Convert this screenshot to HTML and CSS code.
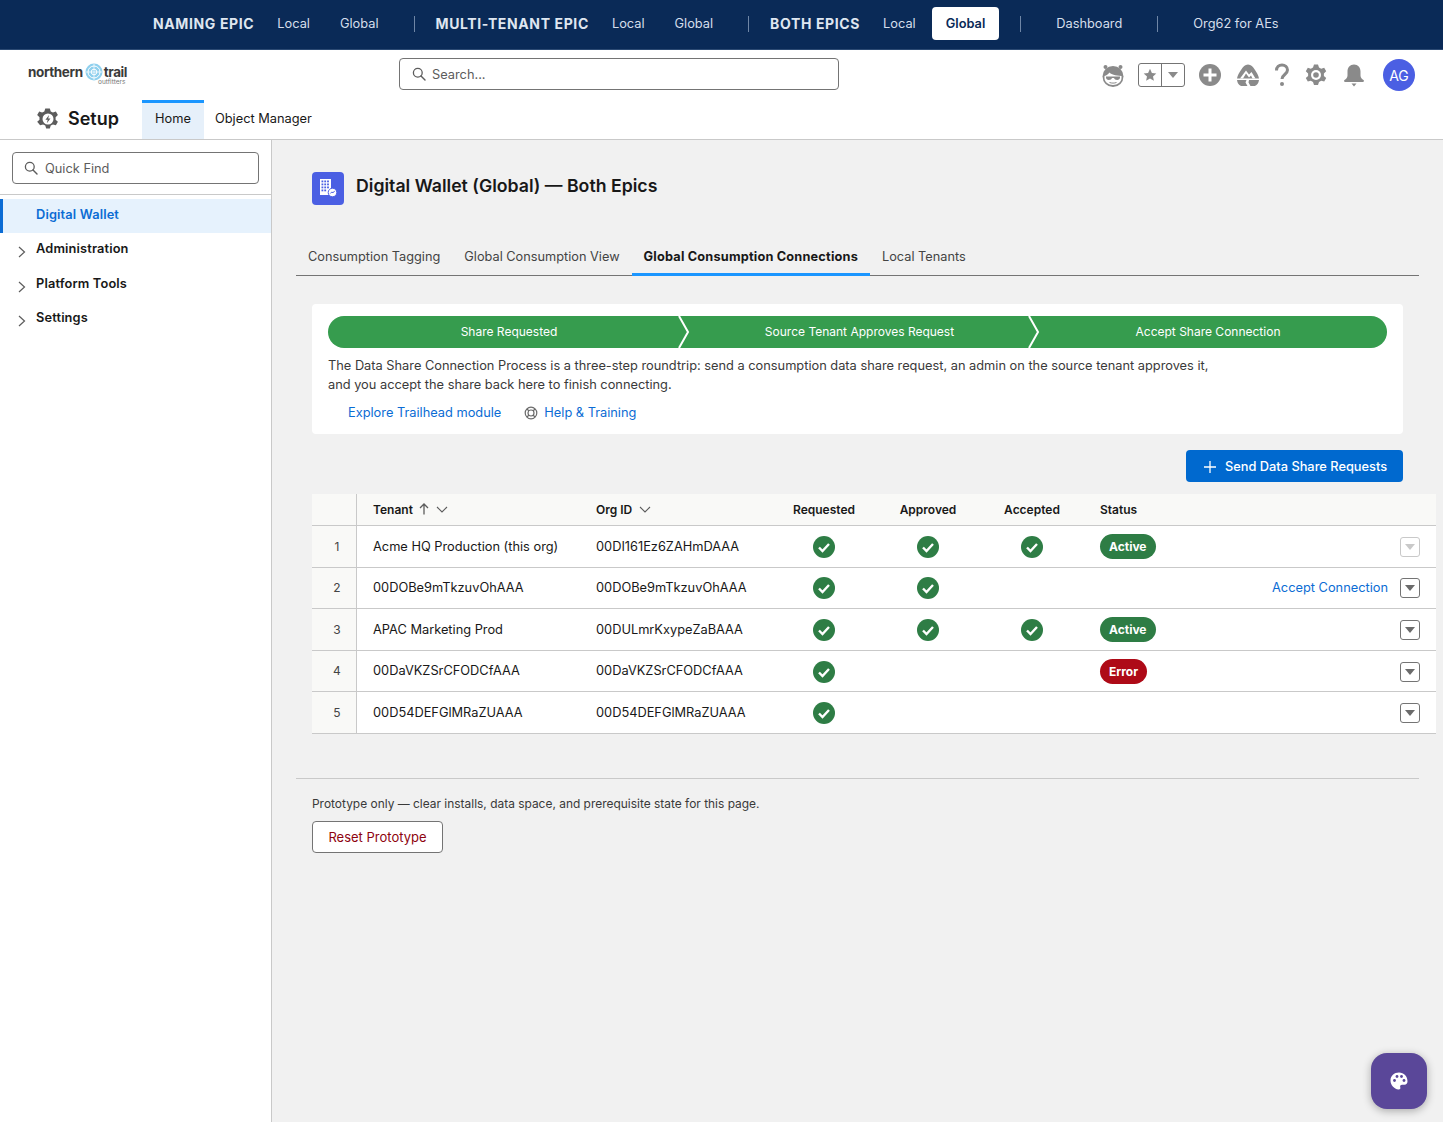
FILE: index.html
```html
<!DOCTYPE html>
<html lang="en">
<head>
    <meta charset="UTF-8">
    <meta name="viewport" content="width=device-width, initial-scale=1.0">
    <title>Digital Wallet (Global) — Both Epics</title>
    <link rel="stylesheet" href="styles.css">
</head>
<body>
    <nav class="topnav">
        <span class="topnav-label">NAMING EPIC</span>
        <a class="topnav-link">Local</a>
        <a class="topnav-link">Global</a>
        <span class="topnav-divider"></span>
        <span class="topnav-label">MULTI-TENANT EPIC</span>
        <a class="topnav-link">Local</a>
        <a class="topnav-link">Global</a>
        <span class="topnav-divider"></span>
        <span class="topnav-label">BOTH EPICS</span>
        <a class="topnav-link">Local</a>
        <a class="topnav-link active">Global</a>
        <span class="topnav-divider"></span>
        <a class="topnav-link">Dashboard</a>
        <span class="topnav-divider"></span>
        <a class="topnav-link">Org62 for AEs</a>
    </nav>

    <header class="header">
        <div class="header-top">
            <div class="logo">
                <span class="logo-word">northern</span>
                <svg class="logo-globe" viewBox="0 0 18 18" width="18" height="18">
                    <circle cx="9" cy="9" r="8.500" fill="#8fd0ee"/>
                    <circle cx="9" cy="9" r="6" fill="none" stroke="#fff" stroke-width="1"/>
                    <circle cx="9" cy="9" r="2.800" fill="none" stroke="#fff" stroke-width="1"/>
                    <path d="M9 1v16M1 9h16" stroke="#fff" stroke-width=".7"/>
                </svg>
                <span class="logo-word">trail</span>
                <span class="logo-sub">outfitters</span>
            </div>
            <div class="global-search">
                <svg class="search-icon" viewBox="0 0 14 14" width="14" height="14"><circle cx="5.800" cy="5.800" r="4.400" fill="none" stroke="#5c5c5c" stroke-width="1.300"/><path d="M9 9l4 4" stroke="#5c5c5c" stroke-width="1.400" stroke-linecap="round"/></svg>
                <span>Search...</span>
            </div>
            <div class="header-icons">
                <svg class="hicon" viewBox="0 0 24 24" width="24" height="24">
                    <circle cx="12" cy="13.500" r="10.500" fill="#8a8a8a"/>
                    <circle cx="4.500" cy="4" r="2" fill="#8a8a8a"/>
                    <circle cx="19.500" cy="4" r="2" fill="#8a8a8a"/>
                    <path d="M3.500 13c2-.5 3.500-1.500 5-3.500 1.500 2 5.500 3 12 3.500v2c0 4-4 7-8.500 7s-8.500-3-8.500-7z" fill="#fff"/>
                    <path d="M5 13.500h14v1c0 1.500-1.200 2.500-2.800 2.500-1.800 0-2.800-.8-3.200-2h-2c-.4 1.200-1.400 2-3.200 2C6.200 17 5 16 5 14.500z" fill="#8a8a8a"/>
                    <path d="M8.500 19.500c2.200.8 4.800.8 7 0" stroke="#8a8a8a" stroke-width="1" fill="none"/>
                </svg>
                <div class="fav-group">
                    <span class="fav-cell"><svg viewBox="0 0 14 14" width="14" height="14"><path d="M7 .8l1.900 4.100 4.400.5-3.300 3 .9 4.400L7 10.600l-3.900 2.200.9-4.400-3.300-3 4.400-.5z" fill="#8a8a8a"/></svg></span>
                    <span class="fav-cell"><span class="caret"></span></span>
                </div>
                <svg class="hicon plus-icon" viewBox="0 0 24 24" width="24" height="24"><circle cx="12" cy="12" r="11" fill="#8a8a8a"/><path d="M12 5.500v13M5.500 12h13" stroke="#fff" stroke-width="3"/></svg>
                <svg class="hicon trail-icon" viewBox="0 0 24 24" width="24" height="24">
                    <path d="M12 1.500c3 0 5 2.200 7 5.500 1.700 2.800 3.500 5.300 4 8.500H1c.5-3.200 2.300-5.700 4-8.500 2-3.300 4-5.500 7-5.500z" fill="#8a8a8a"/>
                    <path d="M4 15.500l6-8 3 4 2.500-2.500 4 6.500h-3l-1.500-3-2 2-3-4-3 5z" fill="#fff"/>
                    <path d="M1 17h9.500l-1 2.500 2 3.500H6c-2.500 0-4.500-2.500-5-6zM13 17h10c-.5 3.500-2.500 6-5 6h-3.500l-2-3.500z" fill="#8a8a8a"/>
                </svg>
                <svg class="hicon help-icon" viewBox="0 0 16 24" width="16" height="24"><path d="M2.500 7.500C2.500 4 5 2 8 2s5.500 2 5.500 5c0 4.500-5.500 4.500-5.500 9" fill="none" stroke="#8a8a8a" stroke-width="3"/><circle cx="8" cy="21" r="2" fill="#8a8a8a"/></svg>
                <svg class="hicon gear-icon" viewBox="0 0 24 24" width="24" height="24"><path d="M12 1.500l2 0 1 3 2.200 1.200 3-.9 2 3.500-2.300 2.100v2.600l2.300 2.100-2 3.500-3-.9-2.200 1.200-1 3h-4l-1-3-2.200-1.200-3 .9-2-3.500 2.300-2.100v-2.600L1.800 8.300l2-3.500 3 .9L9 4.500l1-3z" fill="#8a8a8a"/><circle cx="12" cy="12" r="5" fill="#fff"/><circle cx="12" cy="12" r="2.800" fill="#8a8a8a"/></svg>
                <svg class="hicon bell-icon" viewBox="0 0 24 24" width="24" height="24"><path d="M12 1.500c-4 0-6.500 3-6.500 7v4c0 2.500-1.500 3.500-3 4.500-.8.600-.5 2 .7 2h17.600c1.200 0 1.500-1.400.7-2-1.500-1-3-2-3-4.500v-4c0-4-2.500-7-6.500-7z" fill="#8a8a8a"/><path d="M9.500 20.500h5L12 23.500z" fill="#8a8a8a"/></svg>
                <span class="avatar">AG</span>
            </div>
        </div>
        <div class="header-tabs">
            <svg class="setup-gear" viewBox="0 0 24 24" width="22" height="22"><path d="M12 .500l2 0 1 3.200 2.400 1.200 3.200-1 2.200 3.800-2.500 2.300v2.800l2.500 2.300-2.200 3.800-3.200-1-2.400 1.200-1 3.200h-4l-1-3.200-2.400-1.200-3.200 1L.200 15.100l2.500-2.300V10L.200 7.700l2.200-3.800 3.200 1L8 3.700l1-3.200z" fill="#5c5c5c"/><circle cx="12" cy="12" r="6" fill="#fff"/><path d="M13.200 7.500l-4 5.200h2.500l-1 4 4-5.200h-2.500z" fill="#5c5c5c"/></svg>
            <span class="setup-title">Setup</span>
            <a class="app-tab active">Home</a>
            <a class="app-tab">Object Manager</a>
        </div>
    </header>

    <div class="layout">
        <aside class="sidebar">
            <div class="quick-find-wrap">
                <div class="quick-find">
                    <svg viewBox="0 0 14 14" width="14" height="14"><circle cx="5.800" cy="5.800" r="4.400" fill="none" stroke="#5c5c5c" stroke-width="1.300"/><path d="M9 9l4 4" stroke="#5c5c5c" stroke-width="1.400" stroke-linecap="round"/></svg>
                    <span>Quick Find</span>
                </div>
            </div>
            <a class="side-item active">Digital Wallet</a>
            <a class="side-item"><svg class="chev" viewBox="0 0 8 12" width="8" height="12"><path d="M1 1l5.500 5L1 11" fill="none" stroke="#5c5c5c" stroke-width="1.200"/></svg>Administration</a>
            <a class="side-item"><svg class="chev" viewBox="0 0 8 12" width="8" height="12"><path d="M1 1l5.500 5L1 11" fill="none" stroke="#5c5c5c" stroke-width="1.200"/></svg>Platform Tools</a>
            <a class="side-item"><svg class="chev" viewBox="0 0 8 12" width="8" height="12"><path d="M1 1l5.500 5L1 11" fill="none" stroke="#5c5c5c" stroke-width="1.200"/></svg>Settings</a>
        </aside>

        <main class="main">
            <div class="page-title">
                <span class="title-icon">
                    <svg viewBox="0 0 20 20" width="20" height="20">
                        <path d="M2 1h11v16H2z" fill="#fff"/>
                        <g fill="#4b5fe3">
                            <rect x="3.500" y="2.500" width="1.800" height="1.800"/><rect x="6.300" y="2.500" width="1.800" height="1.800"/><rect x="9.100" y="2.500" width="1.800" height="1.800"/>
                            <rect x="3.500" y="5.500" width="1.800" height="1.800"/><rect x="6.300" y="5.500" width="1.800" height="1.800"/><rect x="9.100" y="5.500" width="1.800" height="1.800"/>
                            <rect x="3.500" y="8.500" width="1.800" height="1.800"/><rect x="6.300" y="8.500" width="1.800" height="1.800"/><rect x="9.100" y="8.500" width="1.800" height="1.800"/>
                            <rect x="3.500" y="11.500" width="1.800" height="1.800"/><rect x="6.300" y="11.500" width="1.800" height="1.800"/>
                        </g>
                        <circle cx="14.500" cy="14.500" r="4.300" fill="#fff" stroke="#4b5fe3"/>
                        <path d="M12.300 15.500l1.600-1.600 1 1 1.800-2" fill="none" stroke="#4b5fe3" stroke-width="1"/>
                    </svg>
                </span>
                <h1>Digital Wallet (Global) — Both Epics</h1>
            </div>

            <div class="tabs">
                <a class="tab">Consumption Tagging</a>
                <a class="tab">Global Consumption View</a>
                <a class="tab active">Global Consumption Connections</a>
                <a class="tab">Local Tenants</a>
            </div>

            <section class="path-card">
                <div class="path">
                    <div class="path-step step-one">Share Requested</div>
                    <div class="path-step step-two">Source Tenant Approves Request</div>
                    <div class="path-step step-three">Accept Share Connection</div>
                    <svg class="path-sep sep-one" viewBox="0 0 12 32" width="12" height="32"><path d="M1 0l9 16-9 16" fill="none" stroke="#fff" stroke-width="2"/></svg>
                    <svg class="path-sep sep-two" viewBox="0 0 12 32" width="12" height="32"><path d="M1 0l9 16-9 16" fill="none" stroke="#fff" stroke-width="2"/></svg>
                </div>
                <p class="path-text">The Data Share Connection Process is a three-step roundtrip: send a consumption data share request, an admin on the source tenant approves it,<br>and you accept the share back here to finish connecting.</p>
                <div class="path-links">
                    <a class="link">Explore Trailhead module</a>
                    <a class="link help-link">
                        <svg viewBox="0 0 14 14" width="14" height="14"><circle cx="7" cy="7" r="5.800" fill="none" stroke="#6b6b6b" stroke-width="1.200"/><circle cx="7" cy="7" r="3" fill="none" stroke="#6b6b6b" stroke-width="1.200"/><path d="M3 3l2 2M11 3L9 5M3 11l2-2M11 11L9 9" stroke="#6b6b6b" stroke-width="1.200"/></svg>
                        Help &amp; Training
                    </a>
                </div>
            </section>

            <div class="actions">
                <button class="btn-primary">
                    <svg class="btn-plus" viewBox="0 0 12 12" width="12" height="12"><path d="M6 0v12M0 6h12" stroke="#fff" stroke-width="1.300"/></svg>
                    Send Data Share Requests
                </button>
            </div>

            <div class="grid">
                <div class="grid-row grid-head">
                    <div class="cell cell-num"></div>
                    <div class="cell">Tenant
                        <svg class="sort-up" viewBox="0 0 10 12" width="10" height="12"><path d="M5 11.500V1M1 5l4-4 4 4" fill="none" stroke="#5c5c5c" stroke-width="1.300"/></svg>
                        <svg class="head-chev" viewBox="0 0 12 7" width="12" height="7"><path d="M1 1l5 5 5-5" fill="none" stroke="#5c5c5c" stroke-width="1.100"/></svg>
                    </div>
                    <div class="cell">Org ID
                        <svg class="head-chev" viewBox="0 0 12 7" width="12" height="7"><path d="M1 1l5 5 5-5" fill="none" stroke="#5c5c5c" stroke-width="1.100"/></svg>
                    </div>
                    <div class="cell cell-center">Requested</div>
                    <div class="cell cell-center">Approved</div>
                    <div class="cell cell-center">Accepted</div>
                    <div class="cell">Status</div>
                </div>

                <div class="grid-row">
                    <div class="cell cell-num">1</div>
                    <div class="cell">Acme HQ Production (this org)</div>
                    <div class="cell">00DI161Ez6ZAHmDAAA</div>
                    <div class="cell cell-center"><svg class="check" viewBox="0 0 22 22" width="22" height="22"><circle cx="11" cy="11" r="11" fill="#2e7d45"/><path d="M6 11.500l3.500 3.500L16 8" fill="none" stroke="#fff" stroke-width="2.400"/></svg></div>
                    <div class="cell cell-center"><svg class="check" viewBox="0 0 22 22" width="22" height="22"><circle cx="11" cy="11" r="11" fill="#2e7d45"/><path d="M6 11.500l3.500 3.500L16 8" fill="none" stroke="#fff" stroke-width="2.400"/></svg></div>
                    <div class="cell cell-center"><svg class="check" viewBox="0 0 22 22" width="22" height="22"><circle cx="11" cy="11" r="11" fill="#2e7d45"/><path d="M6 11.500l3.500 3.500L16 8" fill="none" stroke="#fff" stroke-width="2.400"/></svg></div>
                    <div class="cell cell-status"><span class="badge badge-ok">Active</span><span class="row-menu disabled"><span class="caret"></span></span></div>
                </div>

                <div class="grid-row">
                    <div class="cell cell-num">2</div>
                    <div class="cell">00DOBe9mTkzuvOhAAA</div>
                    <div class="cell">00DOBe9mTkzuvOhAAA</div>
                    <div class="cell cell-center"><svg class="check" viewBox="0 0 22 22" width="22" height="22"><circle cx="11" cy="11" r="11" fill="#2e7d45"/><path d="M6 11.500l3.500 3.500L16 8" fill="none" stroke="#fff" stroke-width="2.400"/></svg></div>
                    <div class="cell cell-center"><svg class="check" viewBox="0 0 22 22" width="22" height="22"><circle cx="11" cy="11" r="11" fill="#2e7d45"/><path d="M6 11.500l3.500 3.500L16 8" fill="none" stroke="#fff" stroke-width="2.400"/></svg></div>
                    <div class="cell cell-center"></div>
                    <div class="cell cell-status"><a class="link row-action">Accept Connection</a><span class="row-menu"><span class="caret"></span></span></div>
                </div>

                <div class="grid-row">
                    <div class="cell cell-num">3</div>
                    <div class="cell">APAC Marketing Prod</div>
                    <div class="cell">00DULmrKxypeZaBAAA</div>
                    <div class="cell cell-center"><svg class="check" viewBox="0 0 22 22" width="22" height="22"><circle cx="11" cy="11" r="11" fill="#2e7d45"/><path d="M6 11.500l3.500 3.500L16 8" fill="none" stroke="#fff" stroke-width="2.400"/></svg></div>
                    <div class="cell cell-center"><svg class="check" viewBox="0 0 22 22" width="22" height="22"><circle cx="11" cy="11" r="11" fill="#2e7d45"/><path d="M6 11.500l3.500 3.500L16 8" fill="none" stroke="#fff" stroke-width="2.400"/></svg></div>
                    <div class="cell cell-center"><svg class="check" viewBox="0 0 22 22" width="22" height="22"><circle cx="11" cy="11" r="11" fill="#2e7d45"/><path d="M6 11.500l3.500 3.500L16 8" fill="none" stroke="#fff" stroke-width="2.400"/></svg></div>
                    <div class="cell cell-status"><span class="badge badge-ok">Active</span><span class="row-menu"><span class="caret"></span></span></div>
                </div>

                <div class="grid-row">
                    <div class="cell cell-num">4</div>
                    <div class="cell">00DaVKZSrCFODCfAAA</div>
                    <div class="cell">00DaVKZSrCFODCfAAA</div>
                    <div class="cell cell-center"><svg class="check" viewBox="0 0 22 22" width="22" height="22"><circle cx="11" cy="11" r="11" fill="#2e7d45"/><path d="M6 11.500l3.500 3.500L16 8" fill="none" stroke="#fff" stroke-width="2.400"/></svg></div>
                    <div class="cell cell-center"></div>
                    <div class="cell cell-center"></div>
                    <div class="cell cell-status"><span class="badge badge-err">Error</span><span class="row-menu"><span class="caret"></span></span></div>
                </div>

                <div class="grid-row">
                    <div class="cell cell-num">5</div>
                    <div class="cell">00D54DEFGlMRaZUAAA</div>
                    <div class="cell">00D54DEFGlMRaZUAAA</div>
                    <div class="cell cell-center"><svg class="check" viewBox="0 0 22 22" width="22" height="22"><circle cx="11" cy="11" r="11" fill="#2e7d45"/><path d="M6 11.500l3.500 3.500L16 8" fill="none" stroke="#fff" stroke-width="2.400"/></svg></div>
                    <div class="cell cell-center"></div>
                    <div class="cell cell-center"></div>
                    <div class="cell cell-status"><span></span><span class="row-menu"><span class="caret"></span></span></div>
                </div>
            </div>

            <div class="reset">
                <p>Prototype only — clear installs, data space, and prerequisite state for this page.</p>
                <button class="btn-reset">Reset Prototype</button>
            </div>
        </main>
    </div>

    <button class="fab">
        <svg viewBox="0 0 20 20" width="20" height="20"><path d="M10 1.500c-4.800 0-8.500 3.400-8.500 8 0 4.400 3.600 8.500 8 9 1.600.2 2.200-1 1.800-2-.6-1.500.2-2.800 1.800-2.800h2.400c1.800 0 3-1.300 3-3.400 0-4.900-3.700-8.800-8.500-8.800z" fill="#fff"/><circle cx="5.500" cy="9.500" r="1.400" fill="#5a4799"/><circle cx="8" cy="5.500" r="1.400" fill="#5a4799"/><circle cx="12.500" cy="5.500" r="1.400" fill="#5a4799"/><circle cx="15" cy="9.500" r="1.400" fill="#5a4799"/></svg>
    </button>
</body>
</html>
```

FILE: styles.css
```css
* {
    margin: 0;
    padding: 0;
    box-sizing: border-box;
}
html, body {
    height: 100%;
}
body {
    font-family: Inter, "Noto Sans", sans-serif;
    font-size: 12.8px;
    color: #181818;
    background: #fff;
    overflow: hidden;
}
a {
    text-decoration: none;
}

/* top demo nav */
.topnav {
    height: 50px;
    background: #0a2a57;
    border-bottom: 1px solid #2c4a73;
    display: flex;
    align-items: center;
    padding: 0 0 2px 153px;
    gap: 2px;
    color: #fff;
}
.topnav-label {
    font-size: 14px;
    font-weight: 700;
    letter-spacing: 0.62px;
    color: #dfe6f0;
    margin-right: 7px;
}
.topnav-link {
    padding: 8.5px 14px;
    line-height: 16px;
    border-radius: 4px;
    color: #d5deeb;
}
.topnav-link.active {
    background: #fff;
    color: #0a2a57;
    font-weight: 600;
}
.topnav-divider {
    width: 1px;
    height: 16px;
    background: #6f86a6;
    margin: 0 19px;
}

/* org header */
.header {
    height: 90px;
    background: #fff;
    border-bottom: 1px solid #c9c9c9;
}
.header-top {
    height: 50px;
    display: flex;
    align-items: center;
    padding: 0 28px 2px;
    position: relative;
}
.logo {
    width: 371px;
    display: flex;
    align-items: center;
    position: relative;
    padding-bottom: 4px;
}
.logo-word {
    font-size: 13.5px;
    font-weight: 700;
    letter-spacing: -0.4px;
    color: #3a3a3a;
}
.logo-globe {
    margin: 0 1px 0 2px;
}
.logo-sub {
    position: absolute;
    left: 70px;
    top: 15px;
    font-size: 6.5px;
    color: #777;
}
.global-search {
    width: 440px;
    height: 32px;
    border: 1px solid #747474;
    border-radius: 4px;
    display: flex;
    align-items: center;
    gap: 6px;
    padding-left: 12px;
    color: #5c5c5c;
    flex-shrink: 0;
}
.header-icons {
    margin: 2px 0 0 auto;
    display: flex;
    align-items: center;
    height: 32px;
}
.hicon {
    display: block;
}
.fav-group {
    display: flex;
    width: 47px;
    height: 24px;
    border: 1px solid #747474;
    border-radius: 3px;
    margin: 0 13px;
}
.fav-cell {
    flex: 1;
    display: flex;
    align-items: center;
    justify-content: center;
}
.fav-cell + .fav-cell {
    border-left: 1px solid #747474;
}
.caret {
    display: block;
    width: 0;
    height: 0;
    border-left: 5px solid transparent;
    border-right: 5px solid transparent;
    border-top: 6px solid #6b6b6b;
}
.fav-cell .caret {
    border-top-color: #8a8a8a;
}
.trail-icon,
.help-icon,
.gear-icon,
.bell-icon {
    margin-left: 14px;
}
.avatar {
    width: 32px;
    height: 32px;
    margin-left: 17px;
    border-radius: 50%;
    background: #4b5fe3;
    color: #fff;
    font-size: 14px;
    display: flex;
    align-items: center;
    justify-content: center;
}
.header-tabs {
    height: 39px;
    display: flex;
    align-items: stretch;
    padding-left: 37px;
}
.setup-gear {
    align-self: center;
    margin-top: -2px;
}
.setup-title {
    font-size: 18px;
    font-weight: 600;
    align-self: center;
    margin: -2px 23px 0 9px;
}
.app-tab {
    display: flex;
    align-items: center;
    padding: 0 11px 5px;
    color: #181818;
    border-top: 3px solid transparent;
}
.app-tab.active {
    background: #e6f0fa;
    border-top-color: #1b96ff;
    padding: 0 12px 5px;
    width: 62px;
    justify-content: center;
}

/* page body */
.layout {
    display: flex;
    height: calc(100% - 140px);
}
.sidebar {
    width: 272px;
    background: #fff;
    border-right: 1px solid #c9c9c9;
    flex-shrink: 0;
}
.quick-find-wrap {
    padding: 12px 12px 10px;
    border-bottom: 1px solid #c9c9c9;
    margin-bottom: 4px;
}
.quick-find {
    height: 32px;
    width: 247px;
    border: 1px solid #747474;
    border-radius: 4px;
    display: flex;
    align-items: center;
    gap: 7px;
    padding-left: 11px;
    color: #5c5c5c;
}
.side-item {
    position: relative;
    display: flex;
    align-items: center;
    height: 34.500px;
    padding: 0 0 3.500px 36px;
    font-weight: 600;
    letter-spacing: 0.15px;
    color: #181818;
}
.side-item.active {
    height: 34px;
    background: #e6f2fd;
    border-left: 3px solid #0b6cd4;
    padding-left: 33px;
    color: #0b6cd4;
}
.chev {
    position: absolute;
    left: 18px;
    top: 13px;
}
.main {
    flex: 1;
    background: #f1f1f1;
    padding: 0 24px;
    min-width: 0;
}
.page-title {
    display: flex;
    align-items: center;
    gap: 12px;
    padding: 31px 0 0 16px;
    height: 65px;
}
.title-icon {
    width: 32px;
    height: 33px;
    border-radius: 4px;
    background: #4b5fe3;
    display: flex;
    align-items: center;
    justify-content: center;
}
h1 {
    font-size: 17.7px;
    font-weight: 600;
    margin-bottom: 6px;
}
.tabs {
    display: flex;
    margin-top: 35px;
    height: 36px;
    border-bottom: 1px solid #747474;
}
.tab {
    display: flex;
    align-items: center;
    padding: 0 12px 3px;
    font-size: 12.75px;
    color: #444;
    height: 36px;
}
.tab.active {
    font-weight: 700;
    letter-spacing: 0.18px;
    color: #181818;
    border-bottom: 3px solid #1b96ff;
    padding-bottom: 0;
}
.path-card {
    margin: 28px 16px 0;
    height: 130px;
    background: #fff;
    border-radius: 4px;
    padding: 12px 16px;
}
.path {
    position: relative;
    display: flex;
    height: 32px;
    border-radius: 16px;
    background: #369c4e;
    margin-bottom: 8px;
}
.path-step {
    display: flex;
    align-items: center;
    justify-content: center;
    padding-bottom: 1px;
    color: #fff;
    font-size: 12px;
}
.step-one {
    width: 362px;
}
.step-two {
    width: 339px;
}
.step-three {
    width: 358px;
}
.path-sep {
    position: absolute;
    top: 0;
}
.sep-one {
    left: 350px;
}
.sep-two {
    left: 700px;
}
.path-text {
    line-height: 19px;
    color: #3a3a3a;
}
.path-links {
    display: flex;
    align-items: center;
    gap: 23px;
    padding-left: 20px;
    margin-top: 11px;
}
.link {
    color: #0b6cd4;
}
.help-link {
    display: flex;
    align-items: center;
    gap: 6px;
}
.actions {
    display: flex;
    justify-content: flex-end;
    margin: 16px 16px 12px;
}
.btn-primary {
    height: 32px;
    width: 217px;
    padding-left: 18px;
    border: none;
    border-radius: 4px;
    background: #0069cf;
    color: #fff;
    font-family: inherit;
    font-size: 12.8px;
    font-weight: 500;
    display: flex;
    align-items: center;
    gap: 9px;
}
.btn-plus {
    margin-top: 2px;
}

/* tenant table */
.grid {
    width: 1124px;
    margin-left: 16px;
}
.grid-row {
    display: grid;
    grid-template-columns: 45px 223px 192px 104px 104px 104px 1fr;
    height: 41.600px;
    background: #fff;
    border-bottom: 1px solid #c9c9c9;
}
.grid-head {
    height: 32px;
    background: #f9f9f7;
    font-size: 12px;
    font-weight: 600;
}
.cell {
    display: flex;
    align-items: center;
    padding: 0 0 0.4px 16px;
    min-width: 0;
}
.cell-num {
    padding: 0 0 0.4px 6px;
    justify-content: center;
    background: #f9f9f7;
    border-right: 1px solid #c9c9c9;
    font-size: 12px;
    color: #444;
}
.cell-center {
    padding-left: 0;
    justify-content: center;
}
.cell-status {
    justify-content: space-between;
    padding-right: 16px;
}
.check {
    margin-top: 1.400px;
}
.sort-up {
    margin-left: 6px;
}
.head-chev {
    margin-left: 7px;
}
.badge {
    height: 25px;
    padding: 0 9px;
    margin-top: 0.400px;
    border-radius: 13px;
    display: flex;
    align-items: center;
    color: #fff;
    font-size: 12px;
    font-weight: 700;
}
.badge-ok {
    background: #2e7d45;
}
.badge-err {
    background: #ae0a17;
}
.row-action {
    margin-left: auto;
    margin-right: 12px;
}
.row-menu {
    width: 20px;
    height: 20px;
    margin-top: 1.400px;
    border: 1px solid #747474;
    border-radius: 3px;
    display: flex;
    align-items: center;
    justify-content: center;
}
.row-menu.disabled {
    border-color: #c9c9c9;
}
.row-menu.disabled .caret {
    border-top-color: #c9c9c9;
}
.reset {
    margin-top: 44px;
    border-top: 1px solid #c9c9c9;
    padding: 17px 16px 0;
    font-size: 11.95px;
    color: #3a3a3a;
}
.btn-reset {
    margin-top: 10px;
    height: 32px;
    width: 131px;
    background: #fff;
    border: 1px solid #747474;
    border-radius: 4px;
    font-family: inherit;
    font-size: 13px;
    color: #8e030f;
}
.fab {
    position: fixed;
    left: 1371px;
    top: 1053px;
    width: 56px;
    height: 56px;
    border: none;
    border-radius: 16px;
    background: #5a4799;
    box-shadow: 0 2px 8px rgba(0, 0, 0, 0.3);
    display: flex;
    align-items: center;
    justify-content: center;
}
```
